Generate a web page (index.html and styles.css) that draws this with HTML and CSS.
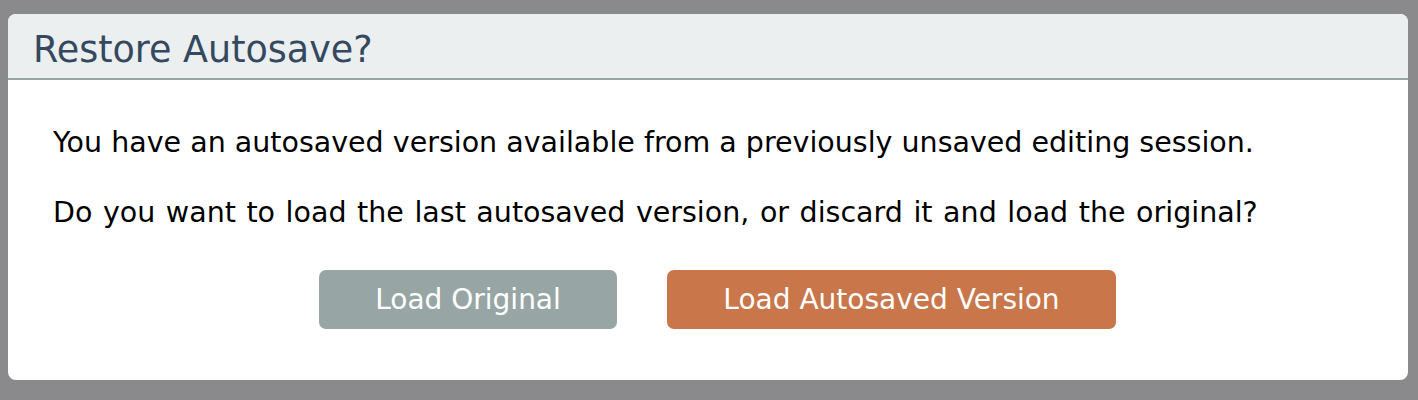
FILE: index.html
```html
<!DOCTYPE html>
<html>
<head>
<meta charset="utf-8">
<link rel="stylesheet" href="styles.css">
</head>
<body>
<div class="dialog">
  <div class="dialog-header">
    <h1 class="dialog-title">Restore Autosave?</h1>
  </div>
  <div class="dialog-body">
    <p class="msg">You have an autosaved version available from a previously unsaved editing session.</p>
    <p class="msg msg-question">Do you want to load the last autosaved version, or discard it and load the original?</p>
    <div class="actions">
      <button class="btn btn-secondary">Load Original</button>
      <button class="btn btn-primary">Load Autosaved Version</button>
    </div>
  </div>
</div>
</body>
</html>
```
FILE: styles.css
```css
html, body {
  margin: 0;
  padding: 0;
  background: #8a8a8c;
  height: 400px;
  overflow: hidden;
}
body {
  padding: 14px 10px 0 8px;
  font-family: "DejaVu Sans", Verdana, sans-serif;
}
.dialog {
  background: #ffffff;
  border-radius: 8px;
  height: 366px;
  overflow: hidden;
}
.dialog-header {
  background: #ebeff0;
  border-bottom: 2px solid #98a5a5;
  box-sizing: border-box;
  height: 66px;
  padding: 15px 0 0 25px;
}
.dialog-title {
  margin: 0;
  font-weight: normal;
  font-size: 36.5px;
  line-height: 42px;
  color: #34495e;
}
.dialog-body {
  padding: 0 45px;
}
.msg {
  margin: 0;
  font-size: 28.5px;
  line-height: 33px;
  color: #000;
}
.msg:first-child {
  margin-top: 46px;
}
.msg + .msg {
  margin-top: 37px;
}
.msg-question {
  word-spacing: 1.5px;
}
.actions {
  display: flex;
  justify-content: center;
  gap: 50px;
  margin-top: 41px;
  padding-left: 19px;
}
.btn {
  border: none;
  border-radius: 7px;
  height: 59px;
  color: #ffffff;
  font-family: "DejaVu Sans", Verdana, sans-serif;
  font-size: 28px;
  padding: 0;
}
.btn-secondary {
  background: #98a5a5;
  width: 298px;
}
.btn-primary {
  background: #c8764a;
  width: 449px;
}
```
